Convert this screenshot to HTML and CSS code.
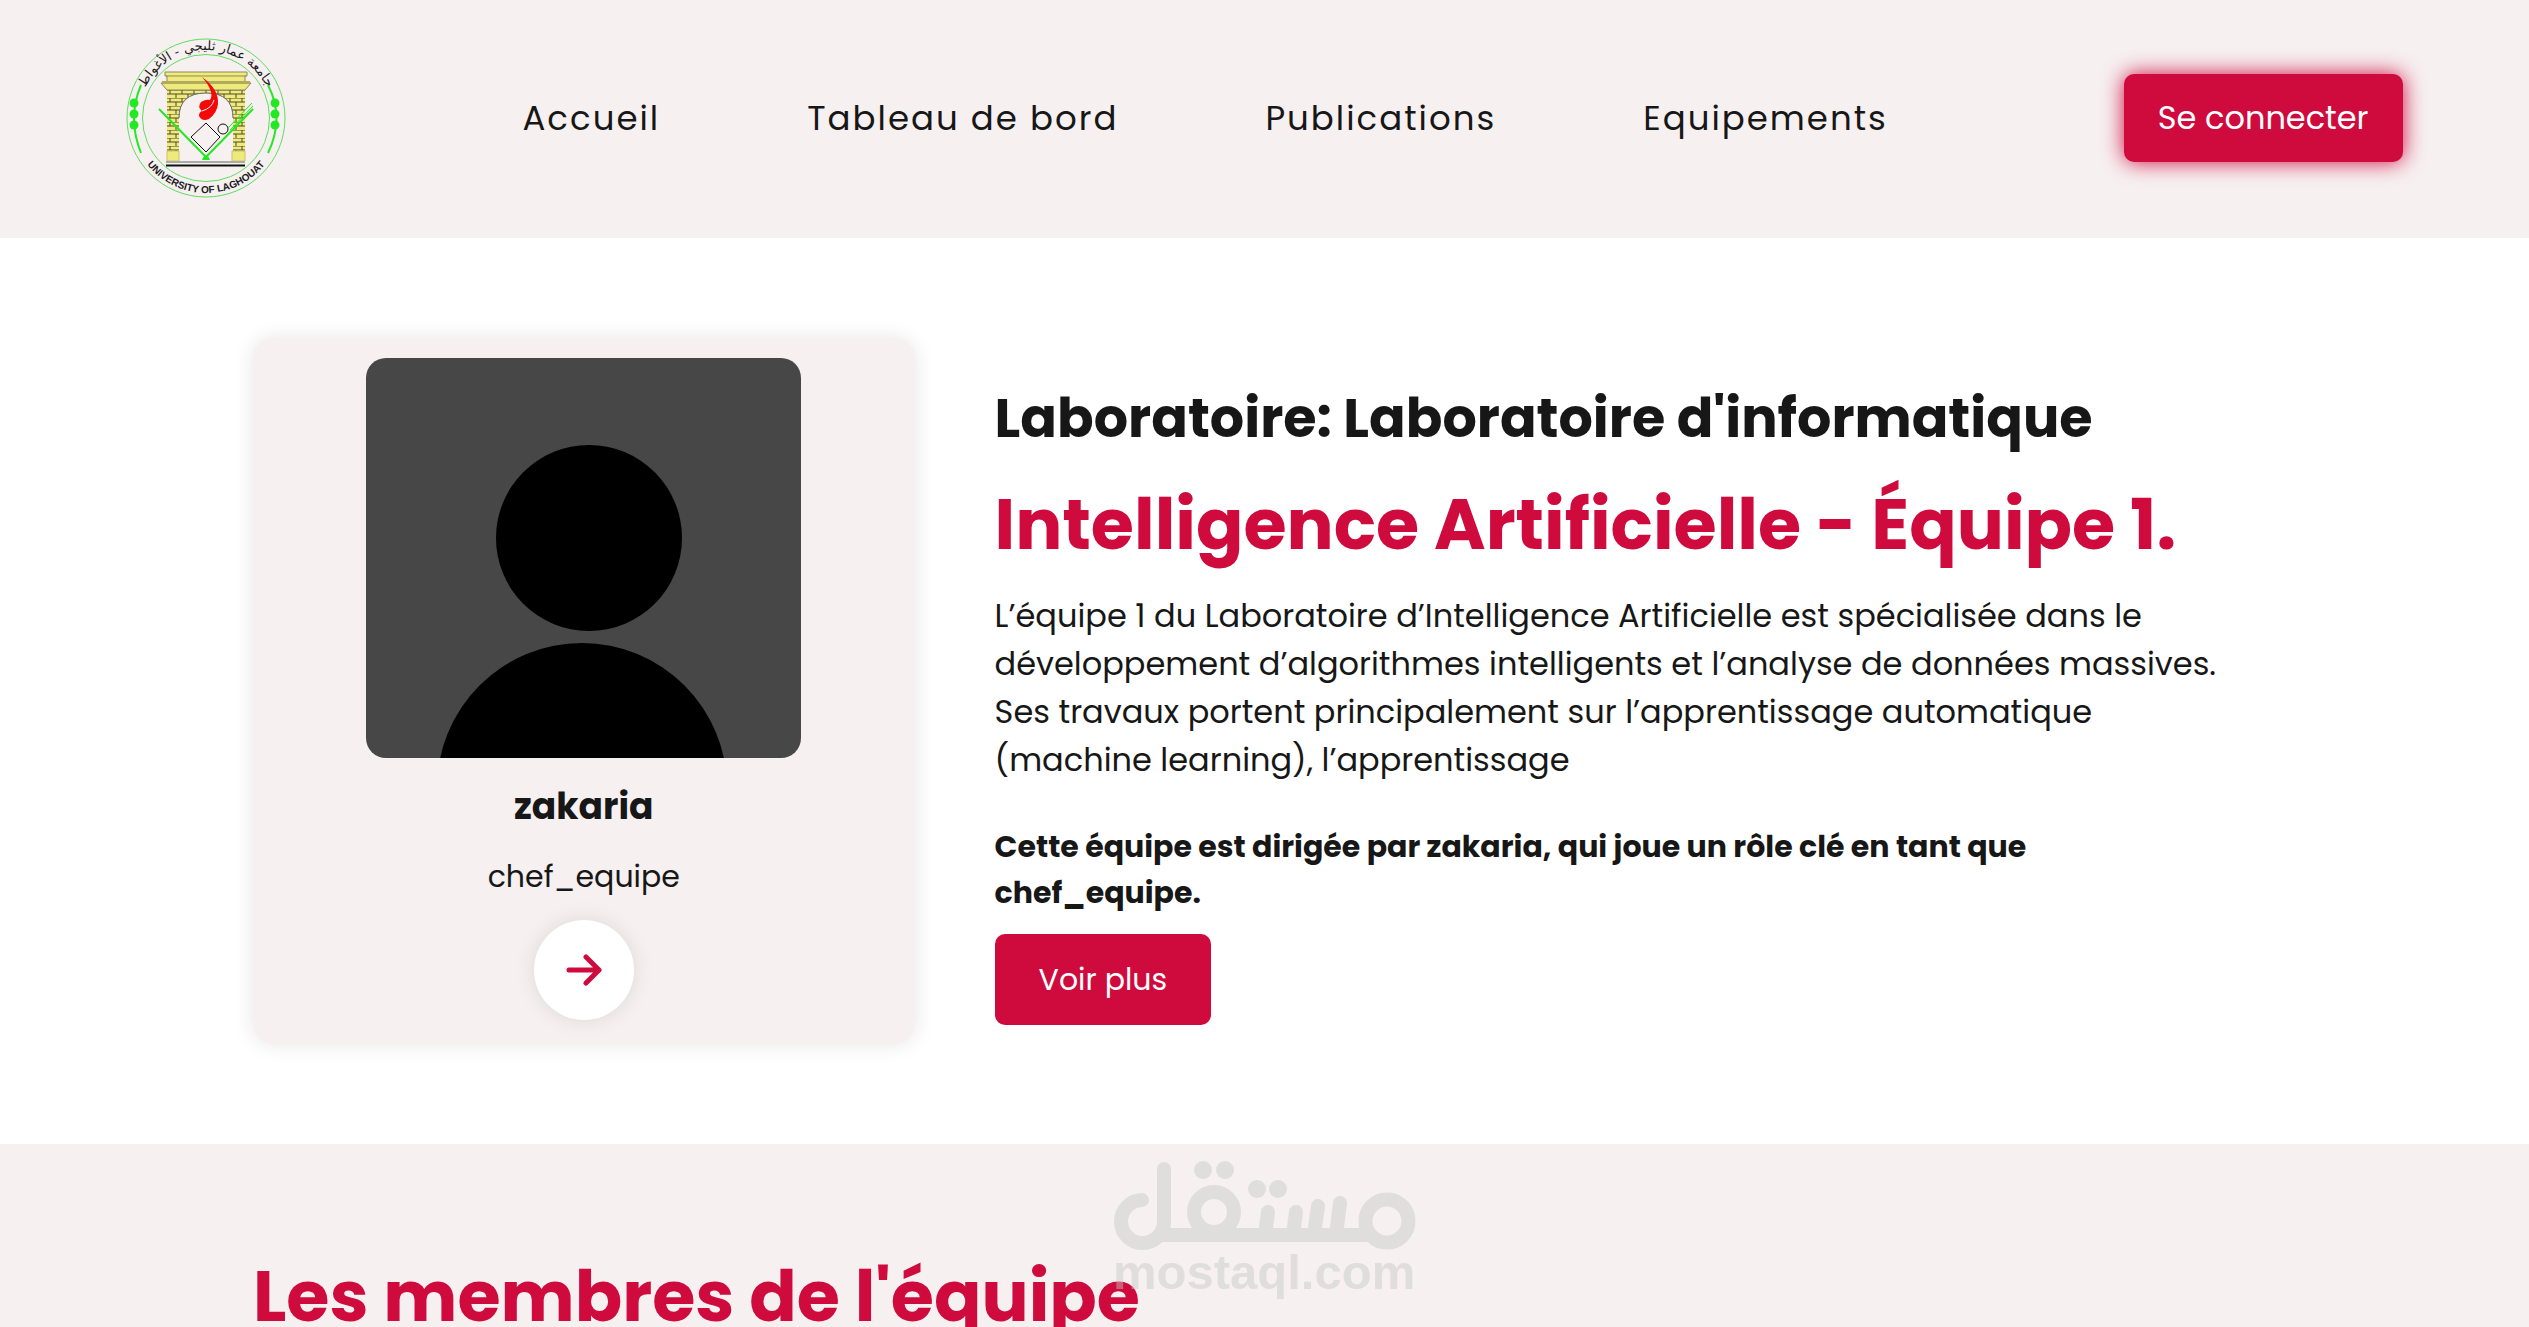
FILE: index.html
```
<!DOCTYPE html>
<html lang="fr">
<head>
<meta charset="utf-8">
<meta name="viewport" content="width=device-width, initial-scale=1">
<title>Intelligence Artificielle - Équipe 1</title>
<link rel="stylesheet" href="styles.css">
</head>
<body>
<header class="header">
  <a class="logo" href="#" aria-label="University of Laghouat">
    <svg viewBox="0 0 160 160">
      <defs>
        <path id="arc-top" d="M12 80a68 68 0 0 1 136 0"/>
        <path id="arc-bottom" d="M5 80a75 75 0 0 0 150 0"/>
        <pattern id="bricks" width="12" height="8" patternUnits="userSpaceOnUse" x="41" y="52">
          <rect width="12" height="8" fill="#f0ea7c"/>
          <path d="M0 0H12M0 4H12M3 0V4M9 4V8" stroke="#4b4a2a" stroke-width="1"/>
        </pattern>
      </defs>
      <g fill="none" stroke="#5fdc5f" stroke-width="1">
        <circle cx="80" cy="80" r="79"/>
        <circle cx="80" cy="80" r="63.500"/>
      </g>
      <g fill="none" stroke="#25e825" stroke-width="2">
        <path d="M15 47Q1 80 15 115M142 47Q159 80 142 115"/>
      </g>
      <g fill="#25e825">
        <circle cx="8" cy="65" r="4.500"/><circle cx="8" cy="76" r="4.500"/><circle cx="8" cy="87" r="4.500"/>
        <circle cx="149" cy="65" r="4.500"/><circle cx="149" cy="76" r="4.500"/><circle cx="149" cy="87" r="4.500"/>
      </g>
      <path d="M41 52H119V123H107V80Q107 55 80 55Q53 55 53 80V123H41Z" fill="url(#bricks)"/>
      <path d="M53 80Q53 55 80 55Q107 55 107 80" fill="none" stroke="#666" stroke-width="1"/>
      <path d="M39 34H121V38H119V45H125L119 52H41L35 45H41V38H39Z" fill="#f0ea7c" stroke="#8b895a" stroke-width="1"/>
      <path d="M40 38H120" stroke="#8b895a"/>
      <path d="M36 44.500H124" stroke="#b0ac5c" stroke-width="3"/>
      <path d="M41 113H53V123H41ZM106 113H119V123H106Z" fill="#f0ea7c" stroke="#c9c468"/>
      <path d="M40 124H119" stroke="#aaa" stroke-width="2"/>
      <path d="M40 127.500H119" stroke="#111" stroke-width="2"/>
      <path d="M80 85L94 99L80 114L65 99Z" fill="none" stroke="#111" stroke-width="1"/>
      <circle cx="97" cy="91" r="5" fill="none" stroke="#111"/>
      <path d="M33 71L80 119L127 71" fill="none" stroke="#25e825" stroke-width="2"/>
      <path d="M102 90L126 65M104 92L127 68" fill="none" stroke="#25e825" stroke-width="1"/>
      <path d="M76 122Q80 112 84 122Z" fill="#25e825"/>
      <path d="M76 39Q93 51 92 66Q91 75 83 81Q76 84 73 78Q73 74 76 73Q71 69 75 64Q80 61 84 62Q89 54 76 39Z" fill="#f40808"/>
      <path d="M76 73Q86 70 88 62" fill="none" stroke="#f6f0f0"/>
      <text class="seal-ar"><textPath href="#arc-top" startOffset="50%">جامعة عمار ثليجي - الأغواط</textPath></text>
      <text class="seal-en"><textPath href="#arc-bottom" startOffset="50%">UNIVERSITY OF LAGHOUAT</textPath></text>
    </svg>
  </a>
  <nav class="nav">
    <a href="#">Accueil</a>
    <a href="#">Tableau de bord</a>
    <a href="#">Publications</a>
    <a href="#">Equipements</a>
  </nav>
  <button class="btn btn-login" type="button">Se connecter</button>
</header>
<main>
  <section class="team">
    <article class="card">
      <svg class="photo" viewBox="0 0 435 400" preserveAspectRatio="xMidYMid slice" role="img" aria-label="zakaria">
        <rect width="435" height="400" fill="#474747"/>
        <circle cx="223" cy="180" r="93"/>
        <circle cx="216" cy="430" r="145"/>
      </svg>
      <h3 class="name">zakaria</h3>
      <p class="role">chef_equipe</p>
      <a class="go" href="#" aria-label="Voir le profil">
        <svg viewBox="0 0 36 36" fill="none" stroke="currentColor" stroke-width="5" stroke-linecap="round" stroke-linejoin="round">
          <path d="M3 18H33M20 5L33 18L20 31"/>
        </svg>
      </a>
    </article>
    <div class="info">
      <h2 class="lab">Laboratoire: Laboratoire d'informatique</h2>
      <h1 class="title">Intelligence Artificielle - Équipe 1.</h1>
      <p class="text">L’équipe 1 du Laboratoire d’Intelligence Artificielle est spécialisée dans le développement d’algorithmes intelligents et l’analyse de données massives. Ses travaux portent principalement sur l’apprentissage automatique (machine learning), l’apprentissage</p>
      <p class="lead">Cette équipe est dirigée par zakaria, qui joue un rôle clé en tant que chef_equipe.</p>
      <button class="btn btn-more" type="button">Voir plus</button>
    </div>
  </section>
  <section class="members">
    <h2 class="title">Les membres de l'équipe</h2>
  </section>
</main>
<svg class="watermark" viewBox="0 0 304 150" role="img" aria-label="مستقل mostaql.com">
  <g fill="none" stroke="#c4cac4" stroke-width="14" stroke-linecap="round">
    <path d="M29 39A21.500 21.500 0 1 0 51 61V8M48 74H254"/>
    <circle cx="101" cy="51" r="20"/>
    <circle cx="274" cy="60" r="21.500"/>
    <path d="M152 74L155 51M180 74L183 51M201 74L205 45M223 74L227 42"/>
  </g>
  <g fill="#c4cac4">
    <circle cx="90" cy="9" r="9"/><circle cx="112" cy="9" r="9"/>
    <circle cx="144" cy="28" r="9"/><circle cx="165" cy="28" r="9"/>
    <text x="0" y="128">mostaql.com</text>
  </g>
</svg>
</body>
</html>
```
FILE: styles.css
```
* {
  box-sizing: border-box;
  margin: 0;
  padding: 0;
}

:root {
  --accent: #cf0b3e;
  --soft: #f6f0f0;
  --ink: #171717;
}

body {
  position: relative;
  height: 100vh;
  overflow: hidden;
  background: #fff;
  color: var(--ink);
  font-family: Poppins, Inter, sans-serif;
}

a {
  color: inherit;
  text-decoration: none;
}

.header {
  display: flex;
  align-items: center;
  justify-content: space-between;
  padding: 38px 5% 40px;
  background: var(--soft);
}

.logo,
.logo svg {
  display: block;
  width: 160px;
  height: 160px;
}

.seal-ar,
.seal-en {
  text-anchor: middle;
  fill: #1b1b1b;
}

.seal-ar {
  font: 13px "DejaVu Sans", sans-serif;
}

.seal-en {
  font: bold 10px "Liberation Sans", sans-serif;
}

.nav {
  display: flex;
  gap: 147px;
  font-size: 34px;
  letter-spacing: 2px;
}

.btn {
  border: 0;
  border-radius: 10px;
  background: var(--accent);
  color: #fff;
  font-family: inherit;
  cursor: pointer;
}

.btn-login {
  padding: 19px 34px;
  font-size: 32px;
  line-height: 50px;
  box-shadow: 0 0 21px var(--accent);
}

.team {
  display: grid;
  grid-template-columns: 662fr 1282fr;
  align-items: center;
  gap: 80px;
  padding: 100px 10%;
}

.card {
  display: flex;
  flex-direction: column;
  align-items: center;
  padding: 20px 20px 24px;
  border-radius: 20px;
  background: var(--soft);
  box-shadow: 0 0 21px rgba(0, 0, 0, 0.1);
}

.photo {
  width: 435px;
  height: 400px;
  border-radius: 20px;
}

.name {
  margin-top: 22px;
  font-size: 36px;
  line-height: 54px;
}

.role {
  margin: 20px 0;
  font-size: 30px;
  line-height: 46px;
}

.go {
  display: grid;
  place-items: center;
  width: 100px;
  height: 100px;
  border-radius: 50%;
  background: #fff;
  color: var(--accent);
  box-shadow: 0 0 21px rgba(0, 0, 0, 0.1);
}

.go svg {
  width: 36px;
  height: 36px;
}

.info {
  padding: 20px 40px 0 0;
}

.lab {
  font-size: 54px;
  line-height: 80px;
}

.title {
  color: var(--accent);
  font-size: 70px;
  line-height: 106px;
}

.info .title {
  margin: 14px 0;
}

.text {
  font-size: 32px;
  line-height: 48px;
}

.lead {
  margin: 40px 0 18px;
  font-size: 30px;
  font-weight: 700;
  line-height: 46px;
}

.btn-more {
  padding: 20px 44px;
  font-size: 30px;
  line-height: 51px;
}

.members {
  padding: 100px 10%;
  background: var(--soft);
}

.watermark {
  position: absolute;
  left: 50%;
  bottom: 16px;
  width: 304px;
  height: 150px;
  overflow: visible;
  transform: translateX(-50%);
  opacity: 0.45;
}

.watermark text {
  font: bold 49px "Liberation Sans", sans-serif;
}
```
